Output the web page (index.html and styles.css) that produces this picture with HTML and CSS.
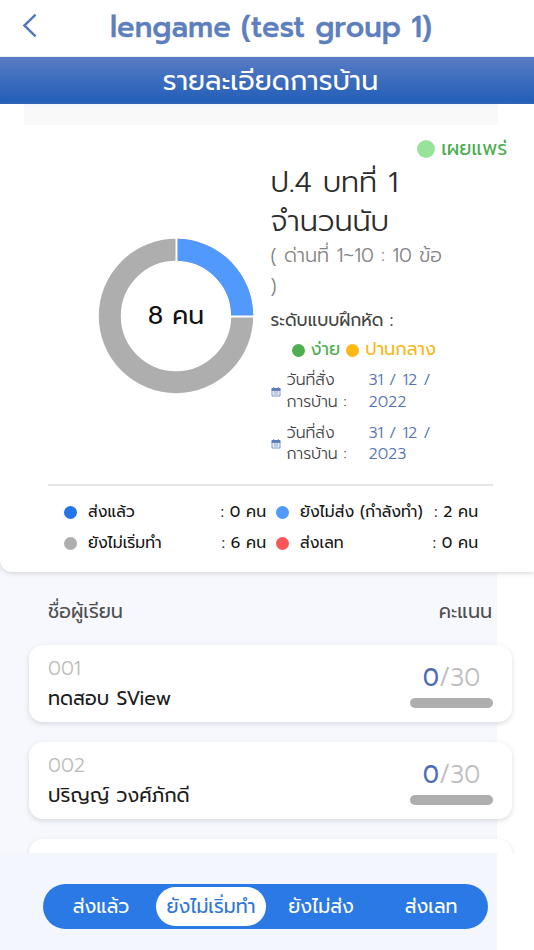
FILE: index.html
```html
<!DOCTYPE html>
<html lang="th">
<head>
<meta charset="utf-8">
<meta name="viewport" content="width=device-width, initial-scale=1">
<title>รายละเอียดการบ้าน</title>
<link rel="stylesheet" href="styles.css">
</head>
<body>
<div class="app">
  <header class="topbar">
    <svg class="back" viewBox="0 0 16 26" aria-hidden="true"><path d="M14.5 1.5 2.5 13 14.5 24.5"/></svg>
    <h1><span class="t t-group">lengame (test group 1)</span></h1>
  </header>
  <div class="banner"><span class="t t-banner">รายละเอียดการบ้าน</span></div>

  <section class="summary">
    <div class="strip"></div>
    <div class="status"><i class="dot dot-status"></i><span class="t t-status">เผยแพร่</span></div>
    <div class="overview">
      <div class="chart">
        <svg viewBox="0 0 156 156" aria-hidden="true">
          <circle class="ring" cx="78" cy="78" r="66.2"/>
          <path class="slice" d="M78 11.8A66.2 66.2 0 0 1 144.2 78"/>
          <path class="gap" d="M78.5 0V26M130 78.5H156"/>
        </svg>
        <div class="total"><span class="t t-total">8 คน</span></div>
      </div>
      <div class="details">
        <div class="title"><span class="t">ป.4 บทที่ 1</span><span class="t">จำนวนนับ</span></div>
        <div class="stage"><span class="t">( ด่านที่ 1~10 : 10 ข้อ</span><span class="t">)</span></div>
        <div class="level"><span class="t">ระดับแบบฝึกหัด :</span></div>
        <div class="levels">
          <i class="dot easy"></i><span class="t t-easy">ง่าย</span>
          <i class="dot medium"></i><span class="t t-medium">ปานกลาง</span>
        </div>
        <div class="date">
          <svg viewBox="0 0 10 10" aria-hidden="true"><path class="cal-fill" d="M1 1.5H9V3.5H1Z"/><path d="M1 1.5H9V9H1ZM2.7 0V2M7.3 0V2M2.5 5H7.5M2.5 7H7.5"/></svg>
          <div class="date-label"><span class="t">วันที่สั่ง</span><span class="t">การบ้าน :</span></div>
          <div class="date-value"><span class="t">31 / 12 /</span><span class="t">2022</span></div>
        </div>
        <div class="date">
          <svg viewBox="0 0 10 10" aria-hidden="true"><path class="cal-fill" d="M1 1.5H9V3.5H1Z"/><path d="M1 1.5H9V9H1ZM2.7 0V2M7.3 0V2M2.5 5H7.5M2.5 7H7.5"/></svg>
          <div class="date-label"><span class="t">วันที่ส่ง</span><span class="t">การบ้าน :</span></div>
          <div class="date-value"><span class="t">31 / 12 /</span><span class="t">2023</span></div>
        </div>
      </div>
    </div>
    <div class="legend">
      <div class="entry"><i class="dot sent"></i><span class="t">ส่งแล้ว</span><span class="t t-count">: 0 คน</span></div>
      <div class="entry"><i class="dot doing"></i><span class="t">ยังไม่ส่ง (กำลังทำ)</span><span class="t t-count">: 2 คน</span></div>
      <div class="entry"><i class="dot idle"></i><span class="t">ยังไม่เริ่มทำ</span><span class="t t-count">: 6 คน</span></div>
      <div class="entry"><i class="dot late"></i><span class="t">ส่งเลท</span><span class="t t-count">: 0 คน</span></div>
    </div>
  </section>

  <main class="students">
    <div class="heading"><span class="t">ชื่อผู้เรียน</span><span class="t">คะแนน</span></div>
    <article class="student">
      <div class="who"><span class="t number">001</span><span class="t name">ทดสอบ SView</span></div>
      <div class="score"><div class="points"><b>0</b>/30</div><div class="bar"></div></div>
    </article>
    <article class="student">
      <div class="who"><span class="t number">002</span><span class="t name">ปริญญ์ วงศ์ภักดี</span></div>
      <div class="score"><div class="points"><b>0</b>/30</div><div class="bar"></div></div>
    </article>
    <article class="student"></article>
  </main>

  <footer class="footer">
    <nav class="tabs">
      <a class="tab"><span class="t">ส่งแล้ว</span></a>
      <a class="tab active"><span class="t">ยังไม่เริ่มทำ</span></a>
      <a class="tab"><span class="t">ยังไม่ส่ง</span></a>
      <a class="tab"><span class="t">ส่งเลท</span></a>
    </nav>
  </footer>
</div>
</body>
</html>
```
FILE: styles.css
```css
* { box-sizing: border-box; }
body { margin: 0; font-family: Prompt, Kanit, Inter, "Noto Sans Thai", "Noto Sans", sans-serif; color: #222; background: #fff; }
.app { width: 534px; height: 950px; overflow: hidden; display: flex; flex-direction: column; background: linear-gradient(90deg, #f6f8fd 497.5px, #fff 497.5px); }
.t { white-space: nowrap; }
.dot { display: block; flex: none; width: 13px; height: 13px; border-radius: 50%; }

.topbar { flex: none; height: 57px; display: flex; align-items: flex-start; padding: 13px 22px 0; background: #fff; border-bottom: 1px solid #e9eef7; }
.back { width: 15px; height: 25px; fill: none; stroke: #5477bb; stroke-width: 2.6; }
h1 { margin: 0 0 0 73px; font-size: 31px; line-height: 28px; font-weight: 500; color: #5e7fbd; }
.t-group { display: inline-block; transform: scaleX(.93); transform-origin: 0 50%; -webkit-text-stroke: .4px #5e7fbd; }
.banner { flex: none; height: 47px; text-align: center; font-size: 27px; line-height: 48px; color: #fff; padding-left: 7px; background: linear-gradient(#5a7cc4, #3c6cbd 50%, #205eb8); }

.summary { flex: none; height: 468px; background: #fff; border-radius: 0 0 0 12px; box-shadow: 0 1px 5px #a5a6b077; position: relative; }
.strip { height: 21px; margin: 0 36px 0 24px; background: #f9f9f9; border-top: 3px solid #f3f6fb; }
.status { height: 38px; padding: 10px 27px 0 0; display: flex; justify-content: flex-end; align-items: center; gap: 6px; color: #4bad50; font-size: 19.3px; line-height: 28px; }
.dot-status { width: 18px; height: 18px; background: #98e39a; }
.overview { display: flex; height: 306px; }
.chart { position: relative; width: 156px; height: 156px; margin: 75px 17px 0 98px; }
.chart svg { display: block; width: 156px; height: 156px; fill: none; }
.ring, .slice { stroke: #aeaeae; stroke-width: 22; }
.slice { stroke: #5199fc; }
.gap { stroke: #fff; stroke-width: 2; }
.total { position: absolute; inset: 0; display: flex; align-items: center; justify-content: center; font-size: 25px; color: #111; }
.details { width: 200px; margin-left: -.5px; }
.title { display: grid; font-size: 29px; line-height: 39px; font-weight: 300; color: #2c2c2c; }
.stage { display: grid; font-size: 19.4px; line-height: 29.5px; font-weight: 300; color: #858585; }
.level { height: 40px; font-size: 17.2px; line-height: 40px; color: #444; }
.levels { height: 20px; padding-left: 21px; display: flex; align-items: center; gap: 6px; font-size: 17.8px; line-height: 20px; }
.easy { background: #4fae50; } .medium { background: #fdb813; }
.t-easy { color: #4fae50; } .t-medium { color: #f9b719; }
.date { display: flex; align-items: center; height: 43px; margin-top: 9.5px; font-size: 15.8px; line-height: 21.5px; font-weight: 300; }
.levels + .date { margin-top: 10px; }
.date svg { width: 10px; height: 10px; fill: none; stroke: #5c7db9; stroke-width: .8; }
.date svg .cal-fill { fill: #5c7db9; }
.date-label { display: grid; width: 82px; margin-left: 6px; color: #444; }
.date-value { display: grid; color: #5474b4; }
.legend { margin: 15px 41px 0 48px; padding: 11px 15px 0 16px; border-top: 2px solid #e5e5eb; display: grid; grid-template-columns: 202px 202px; column-gap: 10px; font-size: 15.7px; line-height: 31px; color: #161616; }
.entry { display: flex; align-items: center; height: 31px; }
.entry .dot { margin-right: 11px; }
.entry .t-count { margin-left: auto; }
.sent { background: #2375e9; } .doing { background: #5199fa; } .idle { background: #aeaeae; } .late { background: #fb5558; }

.students { flex: 1; min-height: 0; overflow: hidden; padding: 25px 22px 0 29px; }
.heading { display: flex; justify-content: space-between; height: 48px; padding: 0 20px 0 19px; font-size: 19.2px; line-height: 30px; color: #505050; }
.student { height: 77px; margin-bottom: 20px; background: #fff; border-radius: 14px; box-shadow: 0 2px 5px #a8a9b466; display: flex; justify-content: space-between; padding: 9px 19px 0; }
.who { display: grid; align-content: start; }
.number { font-size: 19.5px; line-height: 30px; font-weight: 300; color: #bcbcbc; }
.name { font-size: 19.3px; line-height: 30px; color: #1c1c1c; }
.score { width: 83px; text-align: center; }
.points { height: 44px; font-size: 26px; line-height: 47px; font-weight: 300; color: #bdbdbd; white-space: nowrap; transform: scaleX(.93); }
.points b { font-weight: 400; color: #4d70b2; }
.bar { height: 10px; border-radius: 5px; background: #aeaeae; }

.footer { flex: none; height: 97px; padding: 31px 46px 0 43px; background: linear-gradient(90deg, #f3f6fc 497.5px, #fff 497.5px); }
.tabs { height: 45px; border-radius: 23px; background: #2a79e5; display: grid; grid-template-columns: 113px 110px 110px 110px; align-items: center; font-size: 19px; line-height: 39px; color: #fff; }
.tab { text-align: center; height: 39px; border-radius: 20px; white-space: nowrap; }
.tab:first-child { padding-left: 3px; }
.active { background: #fff; color: #2f76d8; }
```
